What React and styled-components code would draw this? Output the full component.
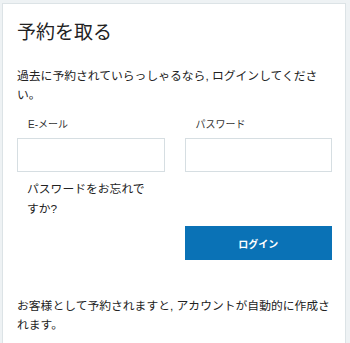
import React from "react";
import styled, { createGlobalStyle } from "styled-components";

const GlobalStyle = createGlobalStyle`
  html, body {
    margin: 0;
    padding: 0;
    background: #eef2f4;
  }
  body {
    font-family: "Liberation Sans", "Noto Sans CJK JP", sans-serif;
    color: #222;
  }
`;

const Page = styled.div`
  height: 100vh;
  padding: 3px 4px 0 2px;
  box-sizing: border-box;
  overflow: hidden;
`;

const Card = styled.div`
  box-sizing: border-box;
  height: 100%;
  background: #fff;
  border: 1px solid #dce3e6;
  border-bottom: none;
  padding: 17px 13px 0 14px;
`;

const Title = styled.h1`
  margin: 0;
  font-size: 19px;
  line-height: 24px;
  font-weight: 400;
  color: #222;
`;

const Text = styled.p`
  margin: ${(p) => p.$top || 0}px 0 0;
  font-size: 11.8px;
  line-height: 19px;
  color: #222;
`;

const Form = styled.div`
  display: grid;
  grid-template-columns: minmax(0, 1fr) minmax(0, 1fr);
  column-gap: 20px;
  margin-top: 13px;
`;

const Field = styled.div`
  display: flex;
  flex-direction: column;
  min-width: 0;
`;

const Label = styled.label`
  font-size: 10px;
  line-height: 14px;
  padding-left: 11px;
  margin-bottom: 6px;
  color: #333;
`;

const Input = styled.input`
  width: 100%;
  min-width: 0;
  height: 34px;
  box-sizing: border-box;
  border: 1px solid #d6dee2;
  background: #fff;
  outline: none;
`;

const Forgot = styled.a`
  display: block;
  margin-top: 7px;
  padding: 0 10px;
  font-size: 11.8px;
  line-height: 20px;
  color: #222;
  text-decoration: none;
`;

const Button = styled.button`
  grid-column: 2;
  margin-top: 7px;
  height: 34px;
  border: none;
  background: #0a72b6;
  color: #fff;
  font-family: inherit;
  font-size: 10px;
  font-weight: 700;
  cursor: pointer;
`;

export default function App() {
  return (
    <>
      <GlobalStyle />
      <Page>
        <Card>
          <Title>予約を取る</Title>
          <Text $top={22}>
            過去に予約されていらっしゃるなら, ログインしてください。
          </Text>
          <Form>
            <Field>
              <Label>E-メール</Label>
              <Input type="email" />
            </Field>
            <Field>
              <Label>パスワード</Label>
              <Input type="password" />
            </Field>
            <Forgot href="#">パスワードをお忘れですか?</Forgot>
            <div />
            <Button>ログイン</Button>
          </Form>
          <Text $top={37}>
            お客様として予約されますと, アカウントが自動的に作成されます。
          </Text>
        </Card>
      </Page>
    </>
  );
}
